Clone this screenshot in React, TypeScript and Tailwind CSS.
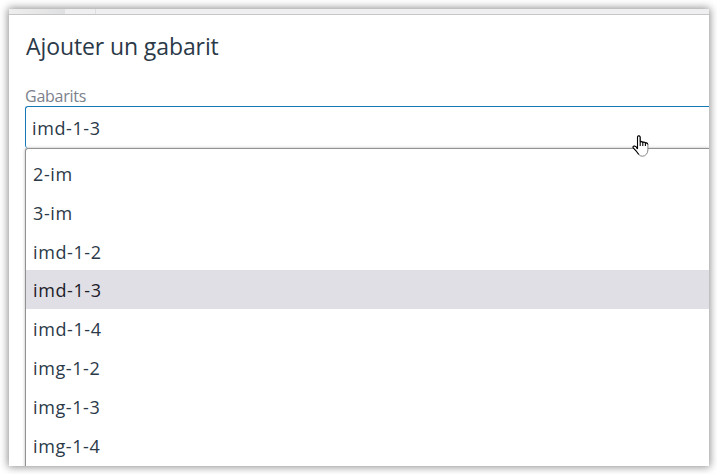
const templates = ['2-im', '3-im', 'imd-1-2', 'imd-1-3', 'imd-1-4', 'img-1-2', 'img-1-3', 'img-1-4'];
const selected = 'imd-1-3';

function HandCursor() {
  return (
    <svg className="absolute left-[606px] top-[28px] h-[23px] w-[18px]" viewBox="0 0 18 23" fill="none" aria-hidden="true">
      <path
        d="M5.5 14V2.3Q5.5 .8 6.8 .8T8.2 2.3V6.6Q9.2 5.8 10.6 6.8Q11.6 6.3 12.8 7.3Q15.5 7.3 15.9 9.5V15Q15.9 17.5 14.3 19.3Q12.8 21.3 10.4 21.2Q8 21.2 6.8 19.5L4.2 16L.8 12.5Q.8 11 2.5 11T5.5 14Z"
        fill="white"
        stroke="#777"
        strokeWidth="0.9"
      />
      <path d="M1 12.5Q.8 11 2.5 11T5.5 14V2.3Q5.5 .8 6.8 .8T8.2 2.3V11M8.2 7Q9.8 6 10.8 7.5V11M10.8 7.4Q13 6.8 13.4 8V11M13.4 8Q15.5 7.6 15.9 9.5M1 12.7L4.2 16L6.8 19.5" stroke="black" strokeWidth="1.1" />
    </svg>
  );
}

export default function App() {
  return (
    <div className="h-[474px] w-[717px] overflow-hidden bg-white p-[9px] font-['Open_Sans','Noto_Sans',sans-serif] text-[#2b3948]">
      <div className="flex h-[457px] w-[700px] flex-col shadow-[0_0_8px_1px_rgba(0,0,0,0.45)]">
        <div className="flex h-[6px] shrink-0 border-b border-[#c6c6c9] bg-[#efeff1]">
          <div className="w-14 bg-linear-to-r from-[#eeeeef] to-[#dfe0e1]" />
          <div className="w-[31px] border-r border-[#dedee2]" />
        </div>
        <div className="min-h-0 flex-1 overflow-hidden bg-white pl-4">
          <h1 className="mt-[15px] h-8 whitespace-nowrap pl-px text-[23px] leading-8 tracking-[-0.1px]">Ajouter un gabarit</h1>
          <div className="mt-[22px] h-[22px] text-[16px] leading-[24px] tracking-[-0.25px] text-[#7b818b]">Gabarits</div>
          <div className="relative h-[42px] rounded-tl-[3px] rounded-bl-[3px] border-l border-t border-[#1679b7] pl-[6px] text-[18px] leading-[43px] tracking-[0.6px]">
            {selected}
            <HandCursor />
          </div>
          <ul className="h-[330px] rounded-tl-[3px] border-l border-t border-[#929292] pt-[4.9px] text-[18px] leading-[40px] tracking-[0.6px] shadow-[0_0_3px_rgba(0,0,0,0.3)]">
            {templates.map((name) => (
              <li key={name} className={name === selected ? 'h-[38.85px] bg-[#e0dfe5] pl-[7px] text-[#202029]' : 'h-[38.85px] pl-[7px]'}>
                {name}
              </li>
            ))}
          </ul>
        </div>
      </div>
    </div>
  );
}
